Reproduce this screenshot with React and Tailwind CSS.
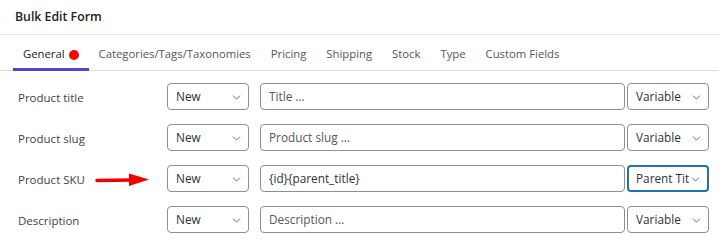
import { ChevronDown } from 'lucide-react'

const TABS = ['General', 'Categories/Tags/Taxonomies', 'Pricing', 'Shipping', 'Stock', 'Type', 'Custom Fields']

const ROWS = [
  { label: 'Product title', placeholder: 'Title …', right: 'Variable' },
  { label: 'Product slug', placeholder: 'Product slug …', right: 'Variable' },
  { label: 'Product SKU', value: '{id}{parent_title}', right: 'Parent Title', focus: true, arrow: true },
  { label: 'Description', placeholder: 'Description …', right: 'Variable' },
]

function Select({ text, focus, className = '' }) {
  return (
    <div
      className={`flex h-[27px] items-center justify-between rounded-[4px] bg-white pr-[5px] pt-[1px] text-[11.8px] text-[#2c3338] ${
        focus ? 'border-2 border-[#2271b1] pl-[7px]' : 'border border-[#8c8f94] pl-[8px]'
      } ${className}`}
    >
      <span className="overflow-hidden whitespace-nowrap">{text}</span>
      <ChevronDown size={13} strokeWidth={1.6} className="shrink-0 text-[#50575e]" />
    </div>
  )
}

function Arrow() {
  return (
    <svg width="56" height="16" viewBox="0 0 56 16" className="shrink-0">
      <line x1="2" y1="8.5" x2="36" y2="8" stroke="#f00000" strokeWidth="3.5" strokeLinecap="round" />
      <polygon points="34,1.5 54,7.5 34,14" fill="#f00000" />
    </svg>
  )
}

export default function App() {
  return (
    <div className="h-[242px] w-[719px] bg-white font-['Open_Sans',sans-serif] text-[#3c434a]">
      <div className="flex h-[35px] items-center border-b border-[#e2e4e7] pl-[15px] text-[12.3px] font-semibold text-[#1d2327]">
        Bulk Edit Form
      </div>
      <div className="flex h-[36px] items-stretch border-b border-[#dcdcde] pl-[13px]">
        {TABS.map((t, i) => (
          <div
            key={t}
            className={`-mb-[1px] flex items-center px-[10px] pt-[6px] text-[11.3px] ${
              i === 0 ? 'border-b-[3px] border-[#5b3fd1] text-[#1d2327]' : 'border-b-[3px] border-transparent text-[#50575e]'
            }`}
          >
            {t}
            {i === 0 && <span className="ml-[4px] inline-block h-[10px] w-[10px] rounded-full bg-[#ff0000]" />}
          </div>
        ))}
      </div>
      <div className="flex flex-col gap-[14px] pt-[12px] pr-[10px]">
        {ROWS.map((r) => (
          <div key={r.label} className="flex items-center">
            <div className="flex w-[167px] items-center pl-[18px] pt-[2px] text-[11.5px] text-[#3c434a]">
              <span className="w-[77px] whitespace-nowrap">{r.label}</span>
              {r.arrow && <Arrow />}
            </div>
            <Select text="New" className="w-[82px]" />
            <div className="ml-[11px] flex h-[27px] w-[365px] items-center rounded-[4px] border border-[#8c8f94] px-[8px] pt-[1px] text-[11.8px]">
              {r.value ? (
                <span className="text-[#2c3338]">{r.value}</span>
              ) : (
                <span className="text-[#50575e]">{r.placeholder}</span>
              )}
            </div>
            <Select text={r.right} focus={r.focus} className="ml-[2px] w-[82px]" />
          </div>
        ))}
      </div>
    </div>
  )
}
